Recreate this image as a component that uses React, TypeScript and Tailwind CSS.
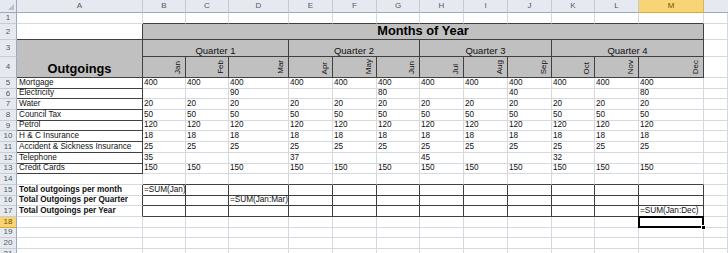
import clsx from "clsx";

const LETTERS = ["A", "B", "C", "D", "E", "F", "G", "H", "I", "J", "K", "L", "M"];
const MONTHS = ["Jan", "Feb", "Mar", "Apr", "May", "Jun", "Jul", "Aug", "Sep", "Oct", "Nov", "Dec"];

type Val = number | null;
const all = (n: number): Val[] => Array(12).fill(n);

const outgoings: [string, Val[]][] = [
  ["Mortgage", all(400)],
  ["Electricity", [null, null, 90, null, null, 80, null, null, 40, null, null, 80]],
  ["Water", all(20)],
  ["Council Tax", all(50)],
  ["Petrol", all(120)],
  ["H & C Insurance", all(18)],
  ["Accident & Sickness Insurance", all(25)],
  ["Telephone", [35, null, null, 37, null, null, 45, null, null, 32, null, null]],
  ["Credit Cards", all(150)],
];

type CellProps = {
  r?: boolean;
  b?: boolean;
  bottom?: boolean;
  className?: string;
  children?: React.ReactNode;
};

function Cell({ r, b, bottom, className, children }: CellProps) {
  return (
    <div
      className={clsx(
        "flex whitespace-nowrap border-r border-b text-[8.2px] leading-none text-[#111]",
        bottom ? "items-end" : "items-center",
        r ? "border-r-[#404040]" : "border-r-[#d6d9de]",
        b ? "border-b-[#404040]" : "border-b-[#d6d9de]",
        className
      )}
    >
      {children}
    </div>
  );
}

function RowHead({ n, active }: { n: number; active?: boolean }) {
  return (
    <div
      className={clsx(
        "flex items-center justify-center border-r border-b border-r-[#9eaabb] text-[8px] leading-none",
        active
          ? "bg-[#f8d574] border-b-[#d9a93c] text-[#7a4d00]"
          : "bg-[#e6eaf0] border-b-[#c6cdd7] text-[#4d5866]"
      )}
    >
      {n}
    </div>
  );
}

function Spare() {
  return <Cell />;
}

export default function App() {
  return (
    <div className="h-[253px] w-[728px] overflow-hidden bg-white font-['Liberation_Sans',Arial,sans-serif]">
      <div className="grid grid-cols-[17px_126px_43px_43px_60px_44px_44px_43px_44px_44px_44px_43px_44px_65px_24px] grid-rows-[13px_11px_16px_17px_21px_repeat(17,10.7px)]">
        {/* column headers */}
        <div className="relative border-r border-b border-r-[#9eaabb] border-b-[#9eaabb] bg-[#e6eaf0]">
          <div className="absolute right-[2px] bottom-[2px] h-0 w-0 border-l-[6px] border-t-[6px] border-l-transparent border-t-transparent border-r-0 border-b-[6px] border-b-[#b6bfcb]" />
        </div>
        {LETTERS.map((l) => (
          <div
            key={l}
            className={clsx(
              "flex items-center justify-center border-r border-b text-[8px] leading-none",
              l === "M"
                ? "bg-[#f8d574] border-r-[#e0b450] border-b-[#d9a93c] text-[#7a4d00]"
                : "bg-[#e6eaf0] border-r-[#c3cad4] border-b-[#9eaabb] text-[#4d5866]"
            )}
          >
            {l}
          </div>
        ))}
        <div className="border-b border-b-[#9eaabb] bg-[#e6eaf0]" />

        {/* row 1 */}
        <RowHead n={1} />
        <Cell />
        {LETTERS.slice(1).map((l) => (
          <Cell key={l} b />
        ))}
        <Spare />

        {/* row 2 */}
        <RowHead n={2} />
        <Cell r b />
        <Cell r b className="col-span-12 justify-center bg-[#c0c0c0]">
          <span className="text-[12.8px] font-bold leading-none text-black">Months of Year</span>
        </Cell>
        <Spare />

        {/* row 3 */}
        <RowHead n={3} />
        <Cell r b bottom className="row-span-2 justify-center bg-[#c0c0c0] pb-[1px]">
          <span className="text-[12.8px] font-bold leading-none text-black">Outgoings</span>
        </Cell>
        {["Quarter 1", "Quarter 2", "Quarter 3", "Quarter 4"].map((q) => (
          <Cell key={q} r b bottom className="col-span-3 justify-center bg-[#c0c0c0] pb-[1px]">
            <span className="text-[9.5px] leading-none">{q}</span>
          </Cell>
        ))}
        <Spare />

        {/* row 4 */}
        <RowHead n={4} />
        {MONTHS.map((m) => (
          <Cell key={m} r b bottom className="justify-end bg-[#c0c0c0] pr-[3px] pb-[3px]">
            <span className="rotate-180 text-[8px] leading-none [writing-mode:vertical-rl]">{m}</span>
          </Cell>
        ))}
        <Spare />

        {/* outgoing rows */}
        {outgoings.map(([label, vals], i) => (
          <div key={label} className="contents">
            <RowHead n={i + 5} />
            <Cell r b className="pl-[2px]">
              {label}
            </Cell>
            {vals.map((v, j) => (
              <Cell key={j} className="pl-px">
                {v}
              </Cell>
            ))}
            <Spare />
          </div>
        ))}

        {/* row 14 */}
        <RowHead n={14} />
        <Cell />
        {LETTERS.slice(1).map((l) => (
          <Cell key={l} b />
        ))}
        <Spare />

        {/* totals */}
        {[
          ["Total outgoings per month", 0, "=SUM(Jan)"],
          ["Total Outgoings per Quarter", 2, "=SUM(Jan:Mar)"],
          ["Total Outgoings per Year", 11, "=SUM(Jan:Dec)"],
        ].map(([label, at, formula], i) => (
          <div key={label as string} className="contents">
            <RowHead n={i + 15} />
            <Cell r className="pl-[2px] font-bold">
              {label}
            </Cell>
            {MONTHS.map((m, j) => (
              <Cell key={m} r b className="pl-px">
                {j === at ? formula : null}
              </Cell>
            ))}
            <Spare />
          </div>
        ))}

        {/* empty rows */}
        {[18, 19, 20, 21].map((n) => (
          <div key={n} className="contents">
            <RowHead n={n} active={n === 18} />
            {LETTERS.map((l) => (
              <Cell key={l} className={clsx(n === 18 && l === "M" && "relative")}>
                {n === 18 && l === "M" && (
                  <>
                    <div className="absolute -top-px -left-px -right-px -bottom-px border-2 border-black" />
                    <div className="absolute -right-[3px] -bottom-[3px] h-[5px] w-[5px] border border-white bg-black" />
                  </>
                )}
              </Cell>
            ))}
            <Spare />
          </div>
        ))}
      </div>
    </div>
  );
}
